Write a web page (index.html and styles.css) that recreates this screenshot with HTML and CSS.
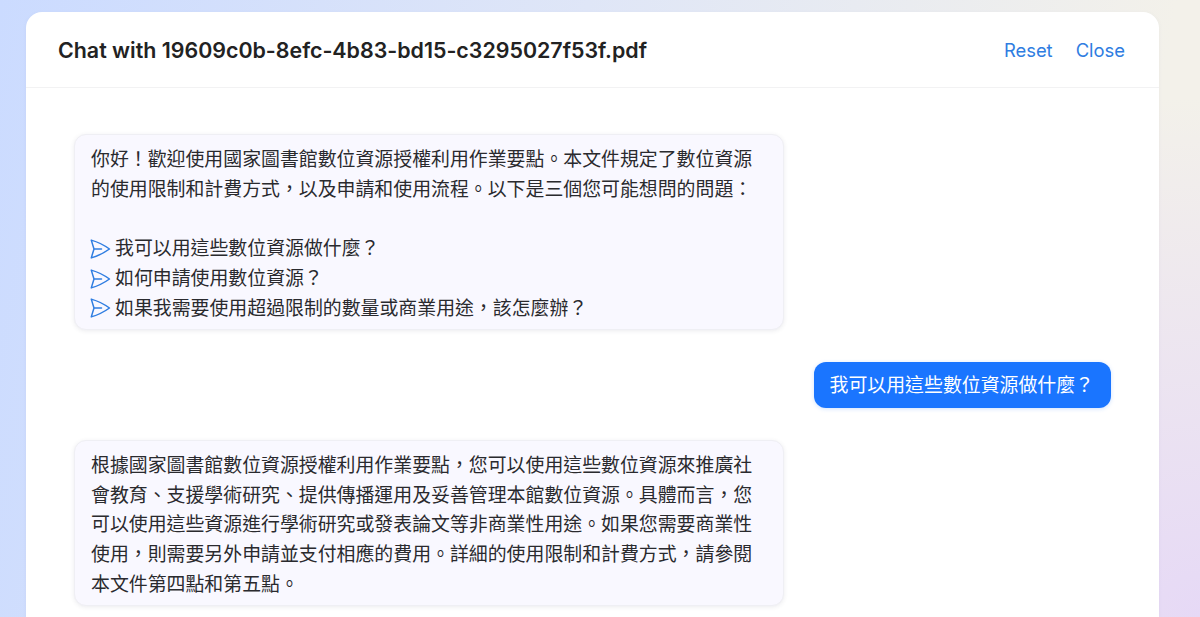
FILE: index.html
```
<!DOCTYPE html>
<html lang="zh-Hant">
<head>
<meta charset="utf-8">
<title>Chat</title>
<link rel="stylesheet" href="styles.css">
</head>
<body>
<main class="card">
  <header class="head">
    <h1 class="title">Chat with 19609c0b-8efc-4b83-bd15-c3295027f53f.pdf</h1>
    <nav class="actions">
      <a class="action">Reset</a>
      <a class="action">Close</a>
    </nav>
  </header>
  <section class="chat">
    <div class="bubble bot">
      <p class="para">你好！歡迎使用國家圖書館數位資源授權利用作業要點。本文件規定了數位資源的使用限制和計費方式，以及申請和使用流程。以下是三個您可能想問的問題：</p>
      <p class="blank">&nbsp;</p>
      <div class="q"><svg class="plane" viewBox="0 0 24 24"><path d="M6 12 3.269 3.125A59.769 59.769 0 0 1 21.485 12 59.768 59.768 0 0 1 3.27 20.875L5.999 12Zm0 0h7.5"/></svg><span>我可以用這些數位資源做什麼？</span></div>
      <div class="q"><svg class="plane" viewBox="0 0 24 24"><path d="M6 12 3.269 3.125A59.769 59.769 0 0 1 21.485 12 59.768 59.768 0 0 1 3.27 20.875L5.999 12Zm0 0h7.5"/></svg><span>如何申請使用數位資源？</span></div>
      <div class="q"><svg class="plane" viewBox="0 0 24 24"><path d="M6 12 3.269 3.125A59.769 59.769 0 0 1 21.485 12 59.768 59.768 0 0 1 3.27 20.875L5.999 12Zm0 0h7.5"/></svg><span>如果我需要使用超過限制的數量或商業用途，該怎麼辦？</span></div>
    </div>
    <div class="bubble user">我可以用這些數位資源做什麼？</div>
    <div class="bubble bot">
      <p class="para">根據國家圖書館數位資源授權利用作業要點，您可以使用這些數位資源來推廣社會教育、支援學術研究、提供傳播運用及妥善管理本館數位資源。具體而言，您可以使用這些資源進行學術研究或發表論文等非商業性用途。如果您需要商業性使用，則需要另外申請並支付相應的費用。詳細的使用限制和計費方式，請參閱本文件第四點和第五點。</p>
    </div>
  </section>
</main>
</body>
</html>
```
FILE: styles.css
```
* { box-sizing: border-box; }
html, body { height: 100%; }
body {
  margin: 0;
  overflow: hidden;
  padding: 12px 41px 0 26px;
  font-family: Inter, "Noto Sans CJK TC", sans-serif;
  background:
    radial-gradient(ellipse 520px 520px at 100% 100%, #e6d9f6 0%, rgba(230,217,246,0) 100%),
    linear-gradient(100deg, #cbdbff 0%, #dfe6f7 45%, #f3f1ea 90%);
}
.card {
  height: 605px;
  background: #fff;
  border-radius: 16px 16px 0 0;
  box-shadow: 0 1px 4px rgba(90,100,140,.06);
}
.head {
  display: flex;
  justify-content: space-between;
  align-items: center;
  height: 76px;
  padding: 0 34px 0 32px;
  border-bottom: 1px solid #f2f2f3;
}
.title { margin: 0; font-size: 21.4px; font-weight: 600; color: #222; }
.actions { display: flex; gap: 23px; }
.action { font-size: 18.4px; color: #2f7de1; }
.chat {
  display: flex;
  flex-direction: column;
  gap: 32px;
  padding: 46px 48px 0;
}
.bubble {
  font-size: 18.9px;
  line-height: 29.7px;
  border-radius: 12px;
}
.bot {
  width: 710px;
  padding: 10px 16px 6px;
  color: #2a2a2e;
  background: #f9f8ff;
  border: 1px solid #efeff4;
  box-shadow: 0 1px 4px rgba(60,60,90,.10);
}
.user {
  align-self: flex-end;
  padding: 9px 17px 7px 16px;
  color: #fff;
  background: #1a75ff;
  box-shadow: 0 1px 4px rgba(26,117,255,.2);
}
.para, .blank { margin: 0; }
.q { display: flex; align-items: center; gap: 3px; }
.plane {
  flex: none;
  width: 24px;
  height: 24px;
  margin-left: -3px;
  fill: none;
  stroke: #2f7de1;
  stroke-width: 1.5;
  stroke-linecap: round;
  stroke-linejoin: round;
}
```
